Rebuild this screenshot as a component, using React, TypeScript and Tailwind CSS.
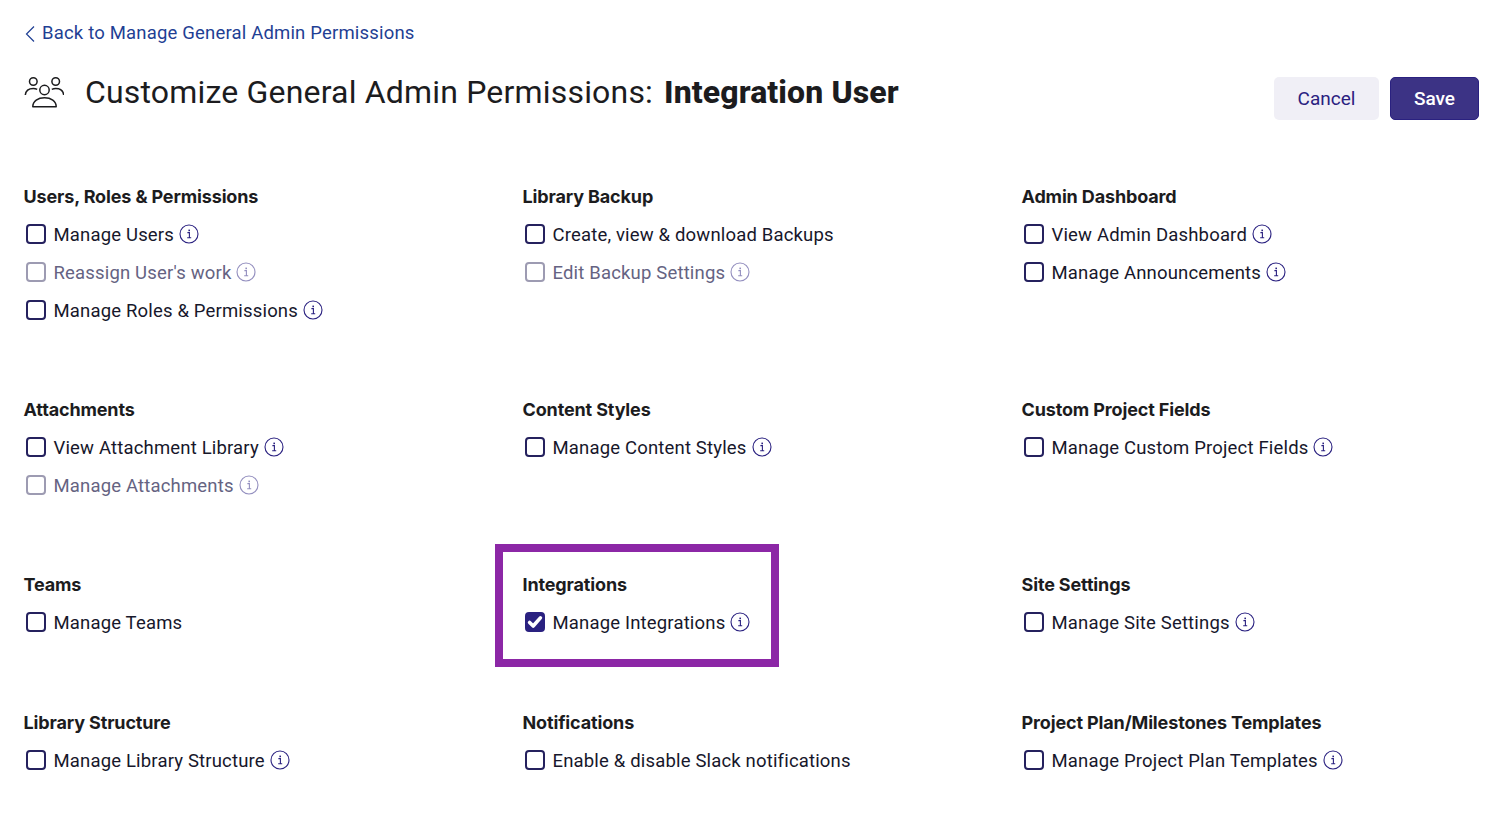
import React from "react";

type Item = { label: string; disabled?: boolean; checked?: boolean; noInfo?: boolean };
type Group = { title: string; items: Item[]; highlight?: boolean };

const rows: { cls: string; groups: Group[] }[] = [
  {
    cls: "h-[213px]",
    groups: [
      { title: "Users, Roles & Permissions", items: [{ label: "Manage Users" }, { label: "Reassign User's work", disabled: true }, { label: "Manage Roles & Permissions" }] },
      { title: "Library Backup", items: [{ label: "Create, view & download Backups", noInfo: true }, { label: "Edit Backup Settings", disabled: true }] },
      { title: "Admin Dashboard", items: [{ label: "View Admin Dashboard" }, { label: "Manage Announcements" }] },
    ],
  },
  {
    cls: "h-[175px]",
    groups: [
      { title: "Attachments", items: [{ label: "View Attachment Library" }, { label: "Manage Attachments", disabled: true }] },
      { title: "Content Styles", items: [{ label: "Manage Content Styles" }] },
      { title: "Custom Project Fields", items: [{ label: "Manage Custom Project Fields" }] },
    ],
  },
  {
    cls: "h-[138px]",
    groups: [
      { title: "Teams", items: [{ label: "Manage Teams", noInfo: true }] },
      { title: "Integrations", highlight: true, items: [{ label: "Manage Integrations", checked: true }] },
      { title: "Site Settings", items: [{ label: "Manage Site Settings" }] },
    ],
  },
  {
    cls: "h-[80px]",
    groups: [
      { title: "Library Structure", items: [{ label: "Manage Library Structure" }] },
      { title: "Notifications", items: [{ label: "Enable & disable Slack notifications", noInfo: true }] },
      { title: "Project Plan/Milestones Templates", items: [{ label: "Manage Project Plan Templates" }] },
    ],
  },
];

function InfoIcon({ disabled }: { disabled?: boolean }) {
  return (
    <svg width="20" height="20" viewBox="0 0 20 20" fill="none" className={`ml-[5px] shrink-0 ${disabled ? "opacity-50" : ""}`}>
      <circle cx="10" cy="10" r="9" stroke="#2a2180" strokeWidth="1.1" />
      <path d="M8.4 8.6H10.4V13.7M8.2 13.7H12.2" stroke="#2a2180" strokeWidth="1.1" />
      <rect x="9.4" y="5.6" width="1.6" height="1.6" fill="#2a2180" />
    </svg>
  );
}

function Checkbox({ checked, disabled }: { checked?: boolean; disabled?: boolean }) {
  return (
    <span
      className={`ml-[2px] mr-[7.5px] flex h-[20px] w-[20px] shrink-0 items-center justify-center rounded-[4px] border-2 ${
        checked ? "border-[#2a2180] bg-[#2a2180]" : disabled ? "border-[#9d9bb2] bg-white" : "border-[#25215e] bg-white"
      }`}
    >
      {checked && (
        <svg width="16" height="16" viewBox="0 0 16 16" fill="none">
          <path d="M2.6 8.4L6.2 12L13.4 3.9" stroke="white" strokeWidth="3.6" strokeLinejoin="round" strokeLinecap="round" />
        </svg>
      )}
    </span>
  );
}

function GroupBlock({ group }: { group: Group }) {
  return (
    <div className="relative">
      {group.highlight && <div className="absolute left-[-28px] top-[-21px] h-[123px] w-[284px] border-[8px] border-[#8c27a6]" />}
      <h3 className="-ml-[0.5px] h-[38px] pt-[8px] font-['Inter',sans-serif] text-[18px] leading-[24px] font-bold tracking-[-0.14px] text-[#1c1c1e]">
        {group.title}
      </h3>
      {group.items.map((it) => (
        <div key={it.label} className="flex h-[38px] items-center">
          <Checkbox checked={it.checked} disabled={it.disabled} />
          <span className={`pt-[1px] font-['Roboto',sans-serif] text-[18.5px] leading-[24px] tracking-[0.17px] ${it.disabled ? "text-[#656382]" : "text-[#17172b]"}`}>
            {it.label}
          </span>
          {!it.noInfo && <InfoIcon disabled={it.disabled} />}
        </div>
      ))}
    </div>
  );
}

export default function App() {
  return (
    <div className="h-[816px] w-[1500px] overflow-hidden bg-white pl-[24px] pr-[21px] font-['Roboto',sans-serif]">
      <a className="flex h-[66px] items-center pt-[1px] text-[18.5px] tracking-[0.18px] text-[#1f3f94]">
        <svg width="12" height="18" viewBox="0 0 12 18" fill="none" className="mr-[6px]">
          <path d="M10 1.5L2.5 9L10 16.5" stroke="#1f3f94" strokeWidth="1.2" />
        </svg>
        Back to Manage General Admin Permissions
      </a>
      <div className="flex h-[111px] items-start justify-between">
        <div className="flex h-[52px] items-center">
          <svg width="40" height="34" viewBox="0 0 40 34" fill="none" className="mr-[21px]" stroke="#1c1c1e" strokeWidth="1.5">
            <circle cx="9.300" cy="6.500" r="3.800" />
            <circle cx="31.700" cy="6.500" r="3.800" />
            <circle cx="20.500" cy="15" r="4.700" />
            <path d="M1.300 20C1.800 15.500 5 13.500 9.300 13.500C10.700 13.500 12 13.800 13.200 14.400" />
            <path d="M39.700 20C39.200 15.500 36 13.500 31.700 13.500C30.300 13.500 29 13.800 27.800 14.400" />
            <path d="M8.800 31.700C8.800 26 14 22.800 20.500 22.800C27 22.800 32.200 26 32.200 31.700H8.800Z" strokeLinejoin="round" />
          </svg>
          <h1 className="text-[32px] leading-[52px] tracking-[0.18px] text-[#1c1c1e]">
            Customize General Admin Permissions:
            <span className="ml-[11px] font-extrabold tracking-[0.1px]">Integration User</span>
          </h1>
        </div>
        <div className="flex gap-[11px] pt-[11px]">
          <button className="h-[43px] w-[105px] rounded-[5px] bg-[#f0eff6] pt-[1px] text-[19px] text-[#2a2180]">Cancel</button>
          <button className="h-[43px] w-[89px] rounded-[5px] border border-[#2a2180] bg-[#3c3385] pt-[1px] text-[19px] font-medium text-white">Save</button>
        </div>
      </div>
      {rows.map((row, i) => (
        <div key={i} className={`grid grid-cols-[499px_499px_1fr] ${row.cls}`}>
          {row.groups.map((g) => (
            <GroupBlock key={g.title} group={g} />
          ))}
        </div>
      ))}
    </div>
  );
}
